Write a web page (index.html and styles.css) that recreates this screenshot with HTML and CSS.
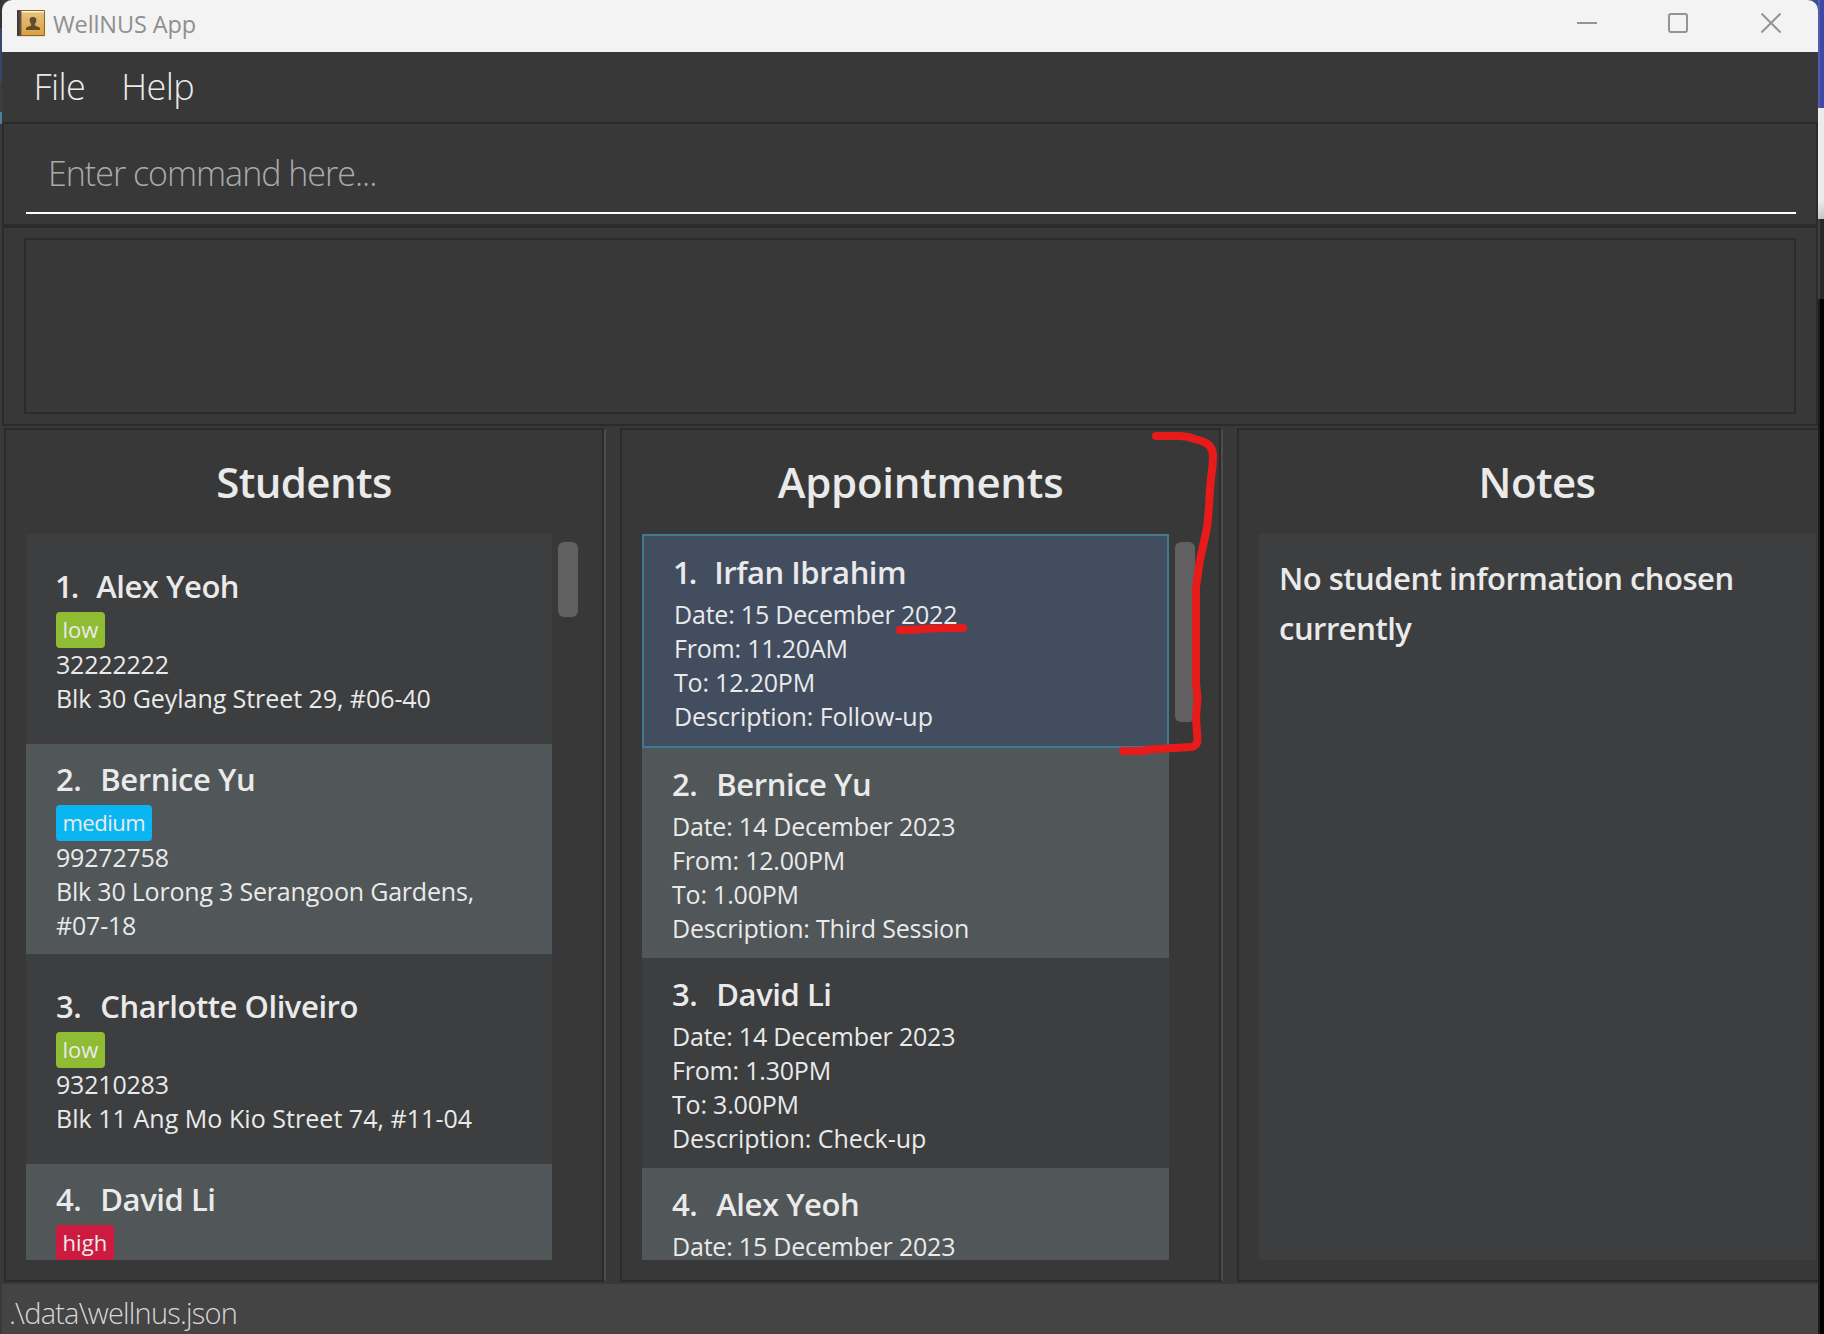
FILE: index.html
```html
<!DOCTYPE html>
<html lang="en">
<head>
<meta charset="utf-8">
<title>WellNUS App</title>
<link rel="stylesheet" href="styles.css">
</head>
<body>
<div class="desktop">
  <div class="backdrop-left"></div>
  <main class="window">
    <header class="titlebar">
      <svg class="app-icon" width="30" height="30" viewBox="0 0 30 30">
        <defs>
          <linearGradient id="cover" x1="0" y1="0" x2="0" y2="1"><stop offset="0" stop-color="#e6c384"/><stop offset="1" stop-color="#dba23c"/></linearGradient>
          <linearGradient id="spine" x1="0" y1="0" x2="1" y2="0"><stop offset="0" stop-color="#3c2e2a"/><stop offset="1" stop-color="#6a5a55"/></linearGradient>
        </defs>
        <rect x="1.5" y="25" width="27" height="1.600" rx=".8" fill="#c9c9c9"/>
        <rect x="1" y="0" width="28" height="26" rx="1" fill="#8f641a"/>
        <rect x="5" y="1" width="23" height="24" fill="url(#cover)"/>
        <rect x="3" y="1" width="25" height="1.400" fill="#fff6e0"/>
        <rect x="1" y="0" width="4.500" height="26" rx="1" fill="url(#spine)"/>
        <path d="M10 20v-1.600q.3-1.300 2.600-1.900 2.400-.6 2.500-1.600v-.9q-1.500-1.600-1.500-4 0-3 3.400-3t3.400 3q0 2.400-1.500 4v.9q.1 1 2.500 1.600 2.300.6 2.600 1.900V20z" fill="#5f4c2e"/>
      </svg>
      <span class="title">WellNUS App</span>
      <div class="controls">
        <svg width="20" height="20" viewBox="0 0 20 20"><path d="M0 10h20"/></svg>
        <svg width="20" height="20" viewBox="0 0 20 20"><rect x="1" y="1" width="18" height="18" rx="2"/></svg>
        <svg width="20" height="20" viewBox="0 0 20 20"><path d="M.5.5l19 19M19.500.5l-19 19"/></svg>
      </div>
    </header>
    <nav class="menubar"><span>File</span><span>Help</span></nav>
    <section class="command"><div class="field">Enter command here...</div></section>
    <section class="result"><div class="result-box"></div></section>
    <section class="panes">
      <article class="pane students">
        <h2>Students</h2>
        <div class="scroller">
          <div class="list">
            <div class="row">
              <h3><b class="one">1.</b>Alex Yeoh</h3><span class="tag low">low</span>
              <p>32222222</p><p class="wide">Blk 30 Geylang Street 29, #06-40</p>
            </div>
            <div class="row even">
              <h3><b>2.</b>Bernice Yu</h3><span class="tag medium">medium</span>
              <p>99272758</p><p>Blk 30 Lorong 3 Serangoon Gardens, #07-18</p>
            </div>
            <div class="row">
              <h3><b>3.</b>Charlotte Oliveiro</h3><span class="tag low">low</span>
              <p>93210283</p><p class="wider">Blk 11 Ang Mo Kio Street 74, #11-04</p>
            </div>
            <div class="row even last">
              <h3><b>4.</b>David Li</h3><span class="tag high">high</span>
            </div>
          </div>
          <div class="thumb"></div>
        </div>
      </article>
      <article class="pane appointments">
        <h2>Appointments</h2>
        <div class="scroller">
          <div class="list">
            <div class="row selected">
              <h3><b class="one">1.</b>Irfan Ibrahim</h3>
              <p>Date: 15 December 2022</p><p>From: 11.20AM</p><p>To: 12.20PM</p><p class="wide">Description: Follow-up</p>
            </div>
            <div class="row even">
              <h3><b>2.</b>Bernice Yu</h3>
              <p>Date: 14 December 2023</p><p>From: 12.00PM</p><p>To: 1.00PM</p><p>Description: Third Session</p>
            </div>
            <div class="row">
              <h3><b>3.</b>David Li</h3>
              <p>Date: 14 December 2023</p><p>From: 1.30PM</p><p>To: 3.00PM</p><p class="wide">Description: Check-up</p>
            </div>
            <div class="row even last">
              <h3><b>4.</b>Alex Yeoh</h3>
              <p>Date: 15 December 2023</p>
            </div>
          </div>
          <div class="thumb"></div>
        </div>
      </article>
      <article class="pane notes">
        <h2>Notes</h2>
        <div class="note">No student information chosen currently</div>
      </article>
    </section>
    <footer class="status">.\data\wellnus.json</footer>
  </main>
  <div class="backdrop-right"></div>
  <svg class="markup" viewBox="0 0 1824 1334">
    <path d="M1156 436H1178Q1187 436 1193 438.500L1203 441.500Q1213 445 1213 456Q1213 466 1211 478C1209 495 1209.500 514 1206.500 530C1203 548 1199 560 1198 574L1196 587V683L1197.500 698L1196 717L1197.500 740Q1197.500 746 1191 747L1150 749.500Q1144 751 1138 751H1123"/>
    <path d="M900 630C915 629.500 922 629 932 628.500S952 628 963 628"/>
  </svg>
</div>
</body>
</html>
```
FILE: styles.css
```css
* { box-sizing: border-box; margin: 0; padding: 0; }
body { font-family: "Open Sans", "Noto Sans", sans-serif; color: #eaeaea; background: #383838; }
.desktop { position: relative; display: flex; width: 1824px; height: 1334px; overflow: hidden; background: linear-gradient(90deg, #3a3a3a 50%, #3c4a9c 50%); }
.backdrop-left { width: 2px; background: linear-gradient(#333 0 28px, #33486b 28px 82px, #3e3e3e 82px 112px, #4f7f99 112px 124px, #3a3a3a 124px); }
.backdrop-right { width: 6px; border-left: 2px solid #ffffff1c; background: linear-gradient(#3d49a5 0 108px, #ebebeb 108px 200px, #c4c4c4 219px, #282828 219px 299px, #000 299px); }
.window { display: flex; flex-direction: column; width: 1816px; height: 1334px; border-radius: 10px 10px 0 0; overflow: hidden; background: #383838; }

.titlebar { display: flex; height: 52px; background: #f3f3f3; color: #8f8f8f; }
.app-icon { margin: 10px 7px 0 14px; }
.title { font-size: 23.5px; line-height: 48px; letter-spacing: -.1px; }
.controls { display: flex; gap: 72px; margin: 13px 37px 0 auto; fill: none; stroke: #939393; stroke-width: 2; }
.controls svg:nth-child(2) { margin: 0 1px 0 -1px; }

.menubar { display: flex; gap: 36px; height: 70px; padding-left: 31.500px; font-size: 36px; font-weight: 300; line-height: 70px; letter-spacing: -.6px; }

.command { height: 104px; padding: 10px 20px 10px 22px; border: 2px solid #2b2b2b; }
.field { height: 80px; padding-left: 22px; border-bottom: 2px solid #fff; font-size: 34px; font-weight: 300; line-height: 78px; letter-spacing: -1px; color: #aaa; }
.result { height: 200px; padding: 10px 20px; border: 2px solid #2b2b2b; }
.result-box { height: 176px; border: 2px solid #2b2b2b; }

.panes { display: flex; gap: 14px; height: 858px; padding: 2px 0 2px 2px; }
.pane { height: 854px; padding: 0 0 20px 20px; border: 2px solid #2b2b2b; }
.students { width: 602px; }
.appointments { width: 603px; }
.students, .appointments { border-right: 2px solid #4c4c4c; box-shadow: inset -2px 0 #2b2b2b; }
.notes { flex: 1; border-right: 0; }
h2 { height: 104px; margin-right: 22px; text-align: center; font-size: 42px; font-weight: 590; line-height: 104px; letter-spacing: -.6px; }
.appointments h2 { letter-spacing: -.25px; }
.notes h2 { margin-right: 3px; }

.scroller { display: flex; gap: 6px; height: 726px; }
.list { width: 526px; height: 726px; overflow: hidden; background: #3c3e3f; }
.appointments .list { width: 527px; }
.thumb { width: 20px; height: 75px; margin-top: 8px; border-radius: 6px; background: #606060; }
.appointments .thumb { height: 180px; }

.row { display: flex; flex-direction: column; align-items: flex-start; height: 210px; background: #3c3e3f; }
.even { background: #515658; }
.students .row { justify-content: center; padding: 1px 30px 0; }
.students .row.last { justify-content: flex-start; padding-top: 13px; }
.appointments .row { padding: 14px 30px 0; }
.appointments .selected { height: 214px; border: 2px solid #3e7b91; background: #424d5f; }
h3 { display: flex; font-size: 31px; font-weight: 580; line-height: 44px; letter-spacing: -.45px; margin-bottom: 4px; }
.appointments h3 { margin-bottom: 3px; }
h3 b { margin-right: 19px; font-weight: inherit; }
h3 .one { margin-left: -1px; letter-spacing: -2px; }
p { font-size: 25px; line-height: 34px; letter-spacing: -.2px; }
.students p { position: relative; top: -.5px; }
.wide { letter-spacing: -.06px; }
.wider { letter-spacing: .04px; }
.appointments .last p { margin-top: 3px; line-height: 28px; }
.tag { height: 36px; padding: 0 6.500px; border-radius: 4px; font-size: 22px; font-weight: 450; line-height: 35px; letter-spacing: -.35px; }
.low { background: #8fbc33; letter-spacing: 0; }
.medium { background: #0ab6f2; letter-spacing: -.5px; }
.high { background: #cf1a40; letter-spacing: .05px; }

.note { height: 726px; margin-right: 2px; padding: 19px 19px 19px 20px; background: #3c3e3f; font-size: 31px; font-weight: 580; line-height: 50px; letter-spacing: -.5px; }
.status { height: 50px; padding: 4px 7px 0; background: #444; color: #d6d6d6; font-size: 29px; font-weight: 300; line-height: 50px; letter-spacing: -.8px; }

.markup { position: absolute; inset: 0; width: 1824px; height: 1334px; fill: none; stroke: #e81b1b; stroke-width: 8; stroke-linecap: round; stroke-linejoin: round; }
```
